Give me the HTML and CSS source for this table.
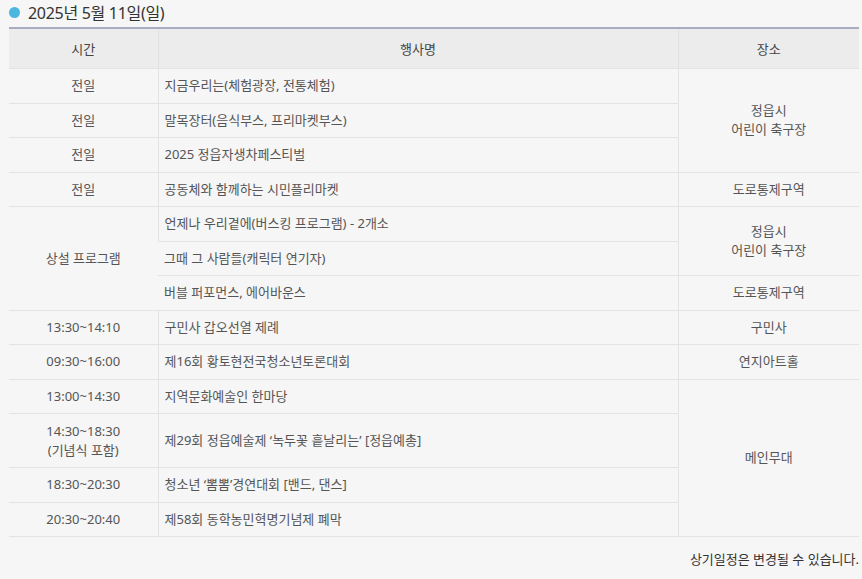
FILE: index.html
```html
<!DOCTYPE html>
<html lang="ko">
<head>
<meta charset="utf-8">
<link rel="stylesheet" href="styles.css">
</head>
<body>
<div class="wrap">
  <h3 class="day-title"><span class="dot"></span>2025년 5월 11일(일)</h3>
  <table class="sched">
    <colgroup>
      <col class="c-time"><col class="c-name"><col class="c-place">
    </colgroup>
    <thead>
      <tr><th>시간</th><th>행사명</th><th>장소</th></tr>
    </thead>
    <tbody>
      <tr><td class="ctr">전일</td><td>지금우리는(체험광장, 전통체험)</td><td class="ctr" rowspan="3">정읍시<br>어린이 축구장</td></tr>
      <tr><td class="ctr">전일</td><td>말목장터(음식부스, 프리마켓부스)</td></tr>
      <tr><td class="ctr">전일</td><td>2025 정읍자생차페스티벌</td></tr>
      <tr><td class="ctr">전일</td><td>공동체와 함께하는 시민플리마켓</td><td class="ctr">도로통제구역</td></tr>
      <tr><td class="ctr" rowspan="3">상설 프로그램</td><td>언제나 우리곁에(버스킹 프로그램) - 2개소</td><td class="ctr" rowspan="2">정읍시<br>어린이 축구장</td></tr>
      <tr><td>그때 그 사람들(캐릭터 연기자)</td></tr>
      <tr><td>버블 퍼포먼스, 에어바운스</td><td class="ctr">도로통제구역</td></tr>
      <tr><td class="ctr">13:30~14:10</td><td>구민사 갑오선열 제례</td><td class="ctr">구민사</td></tr>
      <tr><td class="ctr">09:30~16:00</td><td>제16회 황토현전국청소년토론대회</td><td class="ctr">연지아트홀</td></tr>
      <tr><td class="ctr">13:00~14:30</td><td>지역문화예술인 한마당</td><td class="ctr" rowspan="4">메인무대</td></tr>
      <tr class="tall"><td class="ctr">14:30~18:30<br>(기념식 포함)</td><td>제29회 정읍예술제 ‘녹두꽃 흩날리는’ [정읍예총]</td></tr>
      <tr><td class="ctr">18:30~20:30</td><td>청소년 ‘뽐뽐’경연대회 [밴드, 댄스]</td></tr>
      <tr><td class="ctr">20:30~20:40</td><td>제58회 동학농민혁명기념제 폐막</td></tr>
    </tbody>
  </table>
  <p class="note">상기일정은 변경될 수 있습니다.</p>
</div>
</body>
</html>
```
FILE: styles.css
```css
html, body {
  margin: 0;
  padding: 0;
  background: #f6f6f6;
}
body {
  font-family: "Noto Sans", "Noto Sans CJK KR", sans-serif;
  color: #555;
  font-size: 13px;
}
.wrap {
  padding: 0 3px 0 9px;
}
.day-title {
  display: flex;
  align-items: center;
  gap: 8px;
  margin: 0;
  height: 24px;
  font-size: 16px;
  font-weight: normal;
  color: #333;
  letter-spacing: -0.3px;
}
.dot {
  width: 11px;
  height: 11px;
  border-radius: 50%;
  background: #4bb6e0;
}
.sched {
  width: 850px;
  margin-top: 3px;
  border-collapse: collapse;
  table-layout: fixed;
  border-top: 2px solid #a9adbf;
}
.c-time { width: 149px; }
.c-name { width: 520px; }
.c-place { width: 181px; }
.sched th {
  height: 39px;
  background: #ececec;
  font-weight: normal;
  color: #444;
  border-left: 1px solid #e0e0e0;
  border-bottom: 1px solid #e3e3e3;
  padding: 0;
}
.sched th:first-child { border-left: none; }
.sched td {
  height: 34.5px;
  box-sizing: border-box;
  padding: 0 6px;
  border-bottom: 1px solid #e3e3e3;
  border-left: 1px solid #e3e3e3;
  line-height: 19px;
  color: #555;
}
.sched tr > td:first-child { border-left: none; }
.sched td.ctr { text-align: center; }
.sched tr.tall td { height: 54px; }
.note {
  margin: 12px 0 0;
  text-align: right;
  color: #333;
}
```
